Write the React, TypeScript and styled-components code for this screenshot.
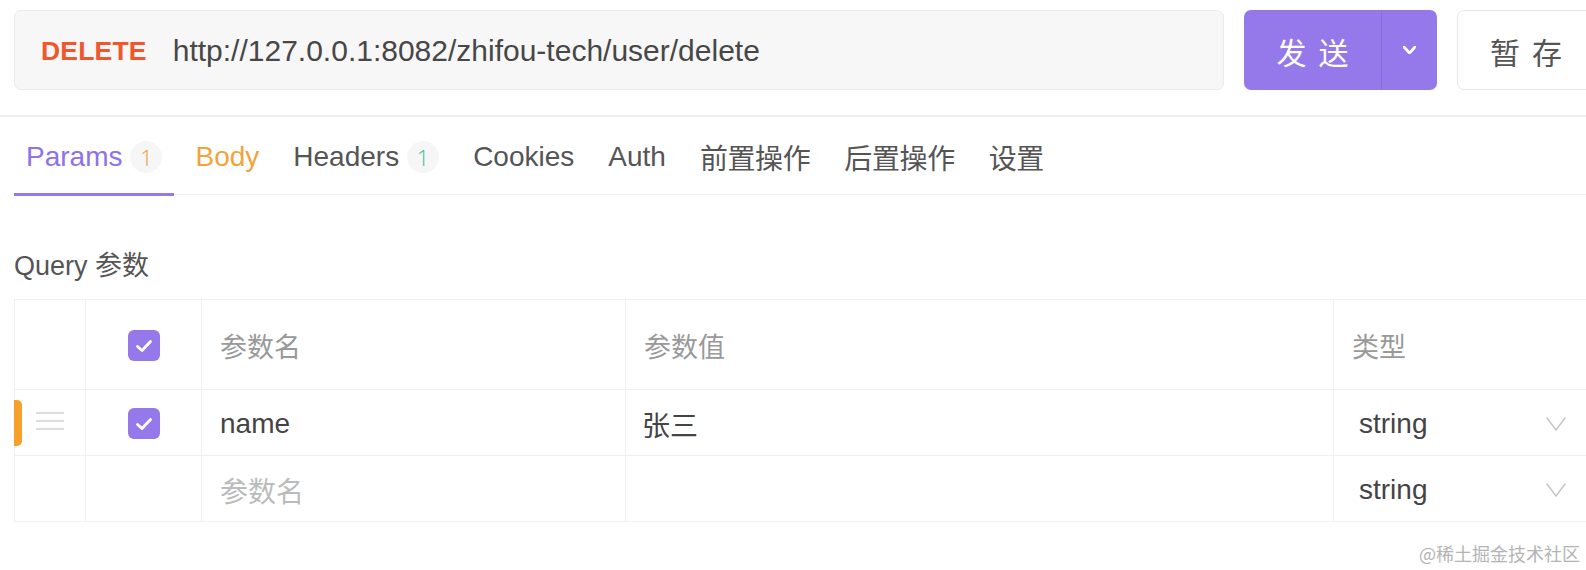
import React from "react";
import styled, {createGlobalStyle} from "styled-components";

const GlobalStyle = createGlobalStyle`
  html, body {
    margin: 0;
    padding: 0;
    background: #ffffff;
    overflow: hidden;
  }
  body {
    font-family: "Liberation Sans", "Noto Sans CJK SC", sans-serif;
    color: #444444;
  }
`;

const Page = styled.div`
  width: 1586px;
  height: 570px;
  position: relative;
  overflow: hidden;
`;

//--------Request bar--------------------------------
const RequestBar = styled.div`
  display: flex;
  align-items: stretch;
  gap: 20px;
  padding: 10px 0 0 14px;
  height: 80px;
`;
const UrlBox = styled.div`
  flex: 0 0 1210px;
  display: flex;
  align-items: center;
  box-sizing: border-box;
  background: #f7f7f7;
  border: 1.5px solid #ebebeb;
  border-radius: 7px;
  padding: 2px 0 0 26px;
`;
const Method = styled.span`
  font-weight: bold;
  font-size: 26.5px;
  color: #f0572d;
  margin-right: 26px;
  letter-spacing: 0.2px;
`;
const Url = styled.span`
  font-size: 30px;
  color: #474747;
`;
const SendGroup = styled.div`
  flex: 0 0 193px;
  display: flex;
  background: #9579ea;
  border-radius: 7px;
  overflow: hidden;
`;
const SendMain = styled.div`
  flex: 0 0 138px;
  display: flex;
  align-items: center;
  justify-content: center;
  color: #ffffff;
  font-size: 30px;
  letter-spacing: 12px;
  padding: 2px 0 0 12px;
  box-sizing: border-box;
  border-right: 1px solid #8a6de0;
`;
const SendMore = styled.div`
  flex: 1;
  display: flex;
  align-items: center;
  justify-content: center;
`;
const SaveButton = styled.div`
  flex: 0 0 170px;
  display: flex;
  align-items: center;
  box-sizing: border-box;
  padding: 2px 0 0 32px;
  border: 1.5px solid #e6e6e6;
  border-radius: 7px;
  background: #ffffff;
  font-size: 30px;
  letter-spacing: 12px;
  color: #555555;
`;
const Divider = styled.div`
  margin-top: 25px;
  height: 1.5px;
  background: #eeeeee;
`;

//--------Tabs--------------------------------
const TabBar = styled.div`
  display: flex;
  gap: 10px;
  margin-left: 14px;
  border-bottom: 1.5px solid #f0f0f0;
`;
const Tab = styled.div<{ $active?: boolean; $color?: string; $cjk?: boolean }>`
  display: flex;
  align-items: center;
  gap: 8px;
  height: 79px;
  padding: 4px 12px 0;
  box-sizing: border-box;
  font-size: 28px;
  letter-spacing: ${p => (p.$cjk ? "-0.4px" : "0")};
  color: ${p => p.$color || "#555555"};
  border-bottom: 3px solid ${p => (p.$active ? "#9579ea" : "transparent")};
  margin-bottom: -1.5px;
  &:first-child {
    margin-right: -1px;
  }
`;
const Badge = styled.span<{ $color: string }>`
  display: inline-flex;
  align-items: center;
  justify-content: center;
  width: 32px;
  height: 32px;
  border-radius: 50%;
  background: #f6f6f6;
  font-size: 22px;
  font-family: "Open Sans", "Liberation Sans", sans-serif;
  font-weight: 300;
  color: ${p => p.$color};
`;

//--------Params table--------------------------------
const SectionTitle = styled.div`
  margin: 53px 0 0 14px;
  font-size: 27px;
  color: #555555;
  height: 36px;
  line-height: 36px;
`;
const Table = styled.div`
  margin: 15px 0 0 14px;
  width: 1640px;
  border-top: 1.5px solid #f0f0f0;
  border-left: 1.5px solid #f0f0f0;
`;
const Row = styled.div<{ $height: number }>`
  display: grid;
  grid-template-columns: 71px 116px 424px 708px 1fr;
  height: ${p => p.$height}px;
  border-bottom: 1.5px solid #f0f0f0;
  box-sizing: border-box;
`;
const Cell = styled.div<{ $center?: boolean; $pad?: number }>`
  position: relative;
  display: flex;
  align-items: center;
  justify-content: ${p => (p.$center ? "center" : "flex-start")};
  padding-left: ${p => p.$pad ?? 18}px;
  padding-top: 2px;
  border-right: 1.5px solid #f0f0f0;
  box-sizing: border-box;
  &:last-child {
    border-right: none;
  }
`;
const HeadText = styled.span`
  font-size: 27px;
  color: #999999;
`;
const CellText = styled.span<{ $muted?: boolean }>`
  font-size: 28px;
  color: ${p => (p.$muted ? "#bbbbbb" : "#444444")};
`;
const Check = styled.span`
  display: inline-flex;
  align-items: center;
  justify-content: center;
  width: 32px;
  height: 31px;
  border-radius: 6px;
  background: #9579ea;
`;
const Marker = styled.span`
  position: absolute;
  left: -1.5px;
  top: 10px;
  width: 8px;
  height: 46px;
  border-radius: 0 5px 5px 0;
  background: #f7a02b;
`;
const Handle = styled.span`
  display: flex;
  flex-direction: column;
  gap: 6px;
  margin-left: 5px;
  margin-top: -5px;
  span {
    display: block;
    width: 28px;
    height: 2px;
    background: #dddddd;
  }
`;
const TypeSelect = styled.div`
  display: flex;
  align-items: center;
  justify-content: space-between;
  width: 207px;
  padding-left: 7px;
`;
const Watermark = styled.div`
  position: absolute;
  right: 6px;
  bottom: 4px;
  font-size: 18px;
  color: #b4b4b4;
  font-family: "Noto Sans CJK SC", sans-serif;
`;

const CheckIcon = () => (
    <svg width="18" height="14" viewBox="0 0 18 14">
        <polyline points="2.5,7.5 7,11.5 15.5,2.5" fill="none" stroke="#ffffff" strokeWidth="2.8"
                  strokeLinecap="round" strokeLinejoin="round"/>
    </svg>
);

const Chevron = ({color, width, height, stroke}: { color: string; width: number; height: number; stroke: number }) => (
    <svg width={width} height={height} viewBox={`0 0 ${width} ${height}`}>
        <polyline points={`1,1 ${width / 2},${height - 1} ${width - 1},1`} fill="none" stroke={color}
                  strokeWidth={stroke} strokeLinecap="round" strokeLinejoin="round"/>
    </svg>
);

type TabItem = {
    label: string;
    active?: boolean;
    color?: string;
    cjk?: boolean;
    badge?: { text: string; color: string };
};

const tabs: TabItem[] = [
    {label: "Params", active: true, color: "#8f72e8", badge: {text: "1", color: "#f0a030"}},
    {label: "Body", color: "#f2a33a"},
    {label: "Headers", badge: {text: "1", color: "#3cc48e"}},
    {label: "Cookies"},
    {label: "Auth"},
    {label: "前置操作", cjk: true},
    {label: "后置操作", cjk: true},
    {label: "设置", cjk: true},
];

const App = () => {
    return (
        <Page>
            <GlobalStyle/>
            <RequestBar>
                <UrlBox>
                    <Method>DELETE</Method>
                    <Url>http://127.0.0.1:8082/zhifou-tech/user/delete</Url>
                </UrlBox>
                <SendGroup>
                    <SendMain>发送</SendMain>
                    <SendMore><Chevron color="#ffffff" width={13} height={8} stroke={2.6}/></SendMore>
                </SendGroup>
                <SaveButton>暂存</SaveButton>
            </RequestBar>
            <Divider/>
            <TabBar>
                {tabs.map(t => (
                    <Tab key={t.label} $active={t.active} $color={t.color} $cjk={t.cjk}>
                        {t.label}
                        {t.badge && <Badge $color={t.badge.color}>{t.badge.text}</Badge>}
                    </Tab>
                ))}
            </TabBar>
            <SectionTitle>Query 参数</SectionTitle>
            <Table>
                <Row $height={90}>
                    <Cell/>
                    <Cell $center $pad={0}><Check><CheckIcon/></Check></Cell>
                    <Cell><HeadText>参数名</HeadText></Cell>
                    <Cell><HeadText>参数值</HeadText></Cell>
                    <Cell><HeadText>类型</HeadText></Cell>
                </Row>
                <Row $height={66}>
                    <Cell $pad={16}>
                        <Marker/>
                        <Handle><span/><span/><span/></Handle>
                    </Cell>
                    <Cell $center $pad={0}><Check><CheckIcon/></Check></Cell>
                    <Cell><CellText>name</CellText></Cell>
                    <Cell $pad={16}><CellText>张三</CellText></Cell>
                    <Cell>
                        <TypeSelect>
                            <CellText>string</CellText>
                            <Chevron color="#c4c4c4" width={20} height={14} stroke={1.4}/>
                        </TypeSelect>
                    </Cell>
                </Row>
                <Row $height={66}>
                    <Cell/>
                    <Cell/>
                    <Cell><CellText $muted>参数名</CellText></Cell>
                    <Cell/>
                    <Cell>
                        <TypeSelect>
                            <CellText>string</CellText>
                            <Chevron color="#c4c4c4" width={20} height={14} stroke={1.4}/>
                        </TypeSelect>
                    </Cell>
                </Row>
            </Table>
            <Watermark>@稀土掘金技术社区</Watermark>
        </Page>
    );
};

export default App;
